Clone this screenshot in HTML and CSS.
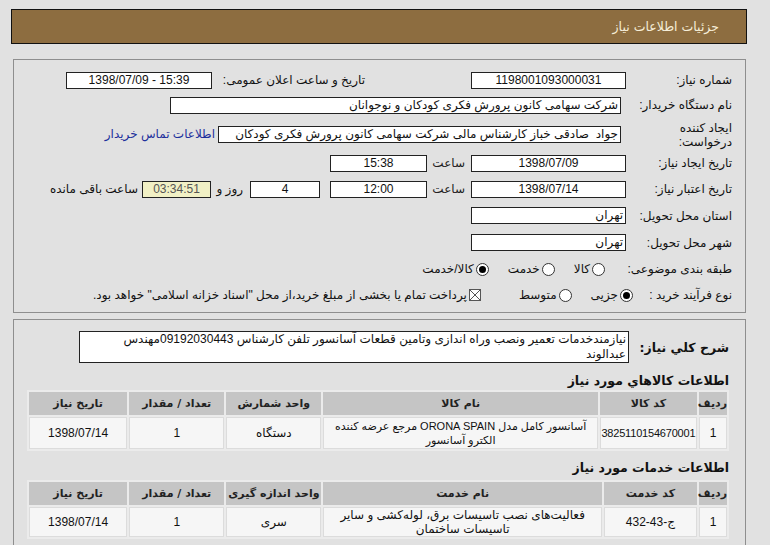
FILE: index.html
```html
<!DOCTYPE html>
<html lang="fa" dir="rtl">
<head>
<meta charset="utf-8">
<title>جزئیات اطلاعات نیاز</title>
<link rel="stylesheet" href="styles.css">
</head>
<body>
<div class="page">
  <div class="titlebar">جزئیات اطلاعات نیاز</div>

  <div class="panel p1">
    <div class="row r1">
      <div class="lbl">شماره نیاز:</div>
      <div class="box w155 c">1198001093000031</div>
      <div class="lbl2">تاریخ و ساعت اعلان عمومی:</div>
      <div class="box w146 c pubdate">1398/07/09 - 15:39</div>
    </div>
    <div class="row r2">
      <div class="lbl">نام دستگاه خریدار:</div>
      <div class="box w451 t ml5">شرکت سهامی کانون پرورش فکری کودکان و نوجوانان</div>
    </div>
    <div class="row r3">
      <div class="lbl two">ایجاد کننده<br>درخواست:</div>
      <div class="box w403 t ml5">جواد&nbsp; صادقی خباز کارشناس مالی شرکت سهامی کانون پرورش فکری کودکان</div>
      <a class="link" href="#">اطلاعات تماس خریدار</a>
    </div>
    <div class="row r4">
      <div class="lbl">تاریخ ایجاد نیاز:</div>
      <div class="box w155 c">1398/07/09</div>
      <div class="saat">ساعت</div>
      <div class="box w97 c">15:38</div>
    </div>
    <div class="row r5">
      <div class="lbl">تاریخ اعتبار نیاز:</div>
      <div class="box w155 c">1398/07/14</div>
      <div class="saat">ساعت</div>
      <div class="box w97 c">12:00</div>
      <div class="box w70 c days">4</div>
      <div class="rooz">روز و</div>
      <div class="box w69 c remain">03:34:51</div>
      <div class="remtxt">ساعت باقی مانده</div>
    </div>
    <div class="row r6">
      <div class="lbl">استان محل تحویل:</div>
      <div class="box w155 t">تهران</div>
    </div>
    <div class="row r7">
      <div class="lbl">شهر محل تحویل:</div>
      <div class="box w155 t">تهران</div>
    </div>
    <div class="row r8">
      <div class="lbl">طبقه بندی موضوعی:</div>
      <span class="radio first"></span><span class="opt">کالا</span>
      <span class="radio"></span><span class="opt">خدمت</span>
      <span class="radio on"></span><span class="opt">کالا/خدمت</span>
    </div>
    <div class="row r9">
      <div class="lbl9">نوع فرآیند خرید :</div>
      <span class="radio on"></span><span class="opt">جزیی</span>
      <span class="radio"></span><span class="opt wide">متوسط</span>
      <span class="check"><svg width="12" height="12" viewBox="0 0 12 12"><rect x="0.5" y="0.5" width="11" height="11" fill="#fff" stroke="#555"/><path d="M1 1L11 11M11 1L1 11" stroke="#555" stroke-width="1"/></svg></span>
      <span class="opt">پرداخت تمام یا بخشی از مبلغ خرید،از محل "اسناد خزانه اسلامی" خواهد بود.</span>
    </div>
  </div>

  <div class="panel p2">
    <div class="descrow">
      <div class="desclbl">شرح کلي نیاز:</div>
      <div class="descbox">نیازمندخدمات تعمیر ونصب وراه اندازی وتامین قطعات آسانسور تلفن کارشناس 09192030443مهندس عبدالوند</div>
    </div>

    <div class="heading">اطلاعات کالاهاي مورد نیاز</div>
    <table class="grid">
      <tr class="hd">
        <th class="c1">ردیف</th>
        <th class="c2">کد کالا</th>
        <th class="c3">نام کالا</th>
        <th class="c4">واحد شمارش</th>
        <th class="c5">تعداد / مقدار</th>
        <th class="c6">تاریخ نیاز</th>
      </tr>
      <tr class="dt tall">
        <td>1</td>
        <td class="code">3825110154670001</td>
        <td class="name"><span class="nw">آسانسور کامل مدل ORONA SPAIN مرجع عرضه کننده</span> الکترو آسانسور</td>
        <td>دستگاه</td>
        <td>1</td>
        <td>1398/07/14</td>
      </tr>
    </table>

    <div class="heading h2">اطلاعات خدمات مورد نیاز</div>
    <table class="grid">
      <tr class="hd">
        <th class="c1">ردیف</th>
        <th class="d2">کد خدمت</th>
        <th class="d3">نام خدمت</th>
        <th class="c4">واحد اندازه گیری</th>
        <th class="c5">تعداد / مقدار</th>
        <th class="c6">تاریخ نیاز</th>
      </tr>
      <tr class="dt">
        <td>1</td>
        <td>ج-43-432</td>
        <td>فعالیت‌های نصب تاسیسات برق، لوله‌کشی و سایر تاسیسات ساختمان</td>
        <td>سری</td>
        <td>1</td>
        <td>1398/07/14</td>
      </tr>
    </table>
  </div>
</div>
</body>
</html>
```

FILE: styles.css
```css
html, body {
  margin: 0;
  padding: 0;
  background: #e1e1e1;
}
body {
  font-family: "Liberation Sans", "DejaVu Sans", sans-serif;
  font-size: 12px;
  color: #111;
  direction: rtl;
  overflow: hidden;
}
.page {
  position: relative;
  width: 770px;
  height: 545px;
  overflow: hidden;
}
.titlebar {
  margin: 9px 23px 0 11px;
  height: 33px;
  background: #8d6d40;
  border: 1px solid #111;
  color: #f6eed8;
  font-family: "DejaVu Sans", sans-serif;
  font-size: 12.5px;
  line-height: 33px;
  padding-right: 27px;
}
.panel {
  margin: 0 24px 0 13px;
  border: 1px solid #8e8e8e;
}
.p1 {
  margin-top: 15px;
  height: 244px;
  padding: 8px 13px 0 0;
}
.p2 {
  margin-top: 6px;
  height: 260px;
  padding: 11px 16px 0 15px;
}
.row {
  display: flex;
  align-items: center;
}
.r1 { height: 24px; }
.r2 { height: 26px; }
.r3 { height: 32px; }
.r4, .r5 { height: 26px; }
.r6, .r7 { height: 27px; }
.r8, .r9 { height: 26px; }
.lbl {
  width: 106px;
  flex: none;
}
.lbl.two {
  line-height: 14px;
  padding-top: 1px;
}
.lbl9 {
  flex: none;
  width: 98px;
  white-space: nowrap;
}
.box {
  flex: none;
  height: 15px;
  line-height: 15px;
  border: 1px solid #222;
  background: #fff;
  box-sizing: content-box;
  overflow: hidden;
  white-space: nowrap;
}
.box.c { text-align: center; }
.box.t { text-align: right; padding-right: 2px; }
.ml5 { margin-right: 5px; }
.w155 { width: 153px; }
.w146 { width: 144px; }
.w451 { width: 447px; }
.w403 { width: 399px; }
.w97 { width: 95px; }
.w70 { width: 68px; }
.w69 { width: 67px; }
.r6 .box.t, .r7 .box.t { width: 151px; }
.lbl2 {
  flex: 1;
  margin-right: 106px;
  text-align: right;
}
.pubdate {
  margin-left: 52px;
  direction: ltr;
}
.link {
  color: #1c2f9c;
  text-decoration: none;
  margin-right: 3px;
  white-space: nowrap;
}
.saat {
  width: 44px;
  flex: none;
  text-align: right;
  padding-right: 6px;
  box-sizing: border-box;
  color: #222;
}
.days { margin-right: 10px; }
.rooz {
  flex: none;
  margin-right: 7px;
  width: 32px;
}
.remain {
  background: #f1f0c5;
  color: #555;
}
.remtxt {
  margin-right: 4px;
  flex: none;
}
.radio {
  flex: none;
  width: 11px;
  height: 11px;
  border: 1px solid #333;
  border-radius: 50%;
  background: #fff;
  position: relative;
  margin-left: 2px;
}
.radio.on::after {
  content: "";
  position: absolute;
  left: 2px;
  top: 2px;
  width: 7px;
  height: 7px;
  border-radius: 50%;
  background: #000;
}
.r8 .radio.first { margin-right: 21px; }
.r9 .radio.on { margin-right: 1px; }
.opt {
  flex: none;
  margin-left: 19px;
  white-space: nowrap;
}
.opt.wide { margin-left: 38px; }
.check {
  flex: none;
  display: flex;
  margin-left: 2px;
}
.descrow {
  display: flex;
  align-items: center;
}
.desclbl {
  width: 100px;
  flex: none;
  font-family: "DejaVu Sans", sans-serif;
  font-weight: bold;
  font-size: 12.5px;
}
.descbox {
  width: 536px;
  height: 30px;
  border: 1px solid #222;
  background: #fff;
  line-height: 15px;
  padding-right: 2px;
  padding-left: 10px;
  overflow: hidden;
}
.heading {
  font-family: "DejaVu Sans", sans-serif;
  font-weight: bold;
  font-size: 12.5px;
  margin-top: 9px;
  height: 17px;
  line-height: 17px;
}
.heading.h2 { margin-top: 8px; height: 20px; }
.grid {
  width: 702px;
  border-collapse: separate;
  border-spacing: 2px;
  background: #ebebeb;
  table-layout: fixed;
  margin-top: 1px;
}
.grid th {
  background: #c5c5c5;
  font-family: "DejaVu Sans", sans-serif;
  font-size: 11px;
  font-weight: bold;
  height: 23px;
  padding: 0;
  color: #222;
}
.grid td {
  background: #f6f6f6;
  border: 1px solid #dcdcdc;
  text-align: center;
  padding: 0 1px;
  line-height: 14px;
  height: 26px;
}
.grid td.name {
  padding: 0;
  font-size: 11px;
}
.grid td.code {
  padding: 0;
  font-size: 11px;
  letter-spacing: -0.2px;
}
.nw { white-space: nowrap; }
.grid .tall td { height: 30px; }
.c1 { width: 28px; }
.c2 { width: 97px; }
.c3 { width: 274px; }
.d2 { width: 93px; }
.d3 { width: 278px; }
.c4 { width: 95px; }
.c5 { width: 95px; }
.c6 { width: 98px; }
```
